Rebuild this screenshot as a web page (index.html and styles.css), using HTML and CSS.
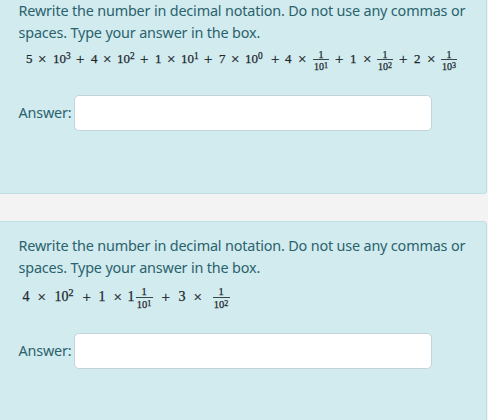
FILE: index.html
```html
<!DOCTYPE html>
<html lang="en">
<head>
<meta charset="utf-8">
<title>Decimal notation</title>
<link rel="stylesheet" href="styles.css">
</head>
<body>
<section class="question first">
  <p class="prompt"><span class="l1">Rewrite the number in decimal notation. Do not use any commas or</span><br><span class="l2">spaces. Type your answer in the box.</span></p>
  <div class="math long">
    <span>5</span><span class="op">×</span><span>10<sup>3</sup></span><span class="op">+</span>
    <span>4</span><span class="op">×</span><span>10<sup>2</sup></span><span class="op">+</span>
    <span>1</span><span class="op">×</span><span>10<sup>1</sup></span><span class="op">+</span>
    <span>7</span><span class="op">×</span><span>10<sup>0</sup></span><span class="op">+</span>
    <span>4</span><span class="op">×</span><span class="frac"><span class="num">1</span><span class="den">10<sup>1</sup></span></span><span class="op">+</span>
    <span>1</span><span class="op">×</span><span class="frac"><span class="num">1</span><span class="den">10<sup>2</sup></span></span><span class="op">+</span>
    <span>2</span><span class="op">×</span><span class="frac"><span class="num">1</span><span class="den">10<sup>3</sup></span></span>
  </div>
  <div class="answer"><label for="a1">Answer:</label><input id="a1" type="text"></div>
</section>
<section class="question second">
  <p class="prompt"><span class="l1">Rewrite the number in decimal notation. Do not use any commas or</span><br><span class="l2">spaces. Type your answer in the box.</span></p>
  <div class="math short">
    <span>4</span><span class="op">×</span><span>10<sup>2</sup></span><span class="op">+</span>
    <span>1</span><span class="op">×</span><span>1</span><span class="frac"><span class="num">1</span><span class="den">10<sup>1</sup></span></span><span class="op">+</span>
    <span>3</span><span class="op">×</span><span class="frac"><span class="num">1</span><span class="den">10<sup>2</sup></span></span>
  </div>
  <div class="answer"><label for="a2">Answer:</label><input id="a2" type="text"></div>
</section>
</body>
</html>
```
FILE: styles.css
```css
* { box-sizing: border-box; }
body {
  margin: 0;
  height: 420px;
  overflow: hidden;
  background: #f3f3f3;
  color: #2b626c;
  font: 14.4px/22px "Noto Sans", "Open Sans", sans-serif;
  letter-spacing: -0.17px;
}
.question {
  width: 487px;
  padding-left: 18.5px;
  background: #d1ebef;
  border: 1px solid #bedfe4;
  border-left: 0;
}
.first {
  height: 194px;
  border-top: 0;
  border-radius: 0 0 4px 0;
}
.second {
  height: 220px;
  margin-top: 27px;
  padding-top: 13px;
  border-radius: 0 4px 0 0;
}
.prompt { margin: 0; white-space: nowrap; }
.math {
  display: grid;
  align-items: center;
  height: 28px;
  color: #1c272b;
  font-family: "Liberation Serif", serif;
  letter-spacing: 0;
  -webkit-text-stroke: 0.25px #1c272b;
  line-height: 14px;
  white-space: nowrap;
}
.long {
  margin: 1px 0 0 7.5px;
  font-size: 13px;
  grid-template-columns: 12px 15px 23px 15px 12px 14px 23px 15px 12px 14px 23px 15px 12px 14px 26px 14px 13px 15px 22px 15px 13px 14px 22px 15px 13px 14px 16px;
}
.short {
  margin: 4px 0 0 4px;
  font-size: 14px;
  grid-template-columns: 15px 17px 28px 16px 15px 14px 8px 26px 17px 15px 19px 17px;
}
.op { font-size: 15px; }
sup {
  font-size: 0.72em;
  line-height: 0;
  vertical-align: 0.45em;
}
.frac {
  display: flex;
  flex-direction: column;
  align-items: center;
  width: 16px;
  font-size: 10px;
  line-height: 9px;
  transform: translateY(1px);
}
.short .frac { width: 17px; font-size: 10.5px; line-height: 10px; }
.num { width: 100%; text-align: center; border-bottom: 1px solid #38474b; }
.den { padding-top: 2px; }
.den sup { font-size: 8px; vertical-align: 0.3em; }
.answer {
  display: flex;
  align-items: center;
  margin-top: 22px;
}
.answer label { width: 55.5px; }
.answer input {
  width: 358px;
  height: 36px;
  padding: 0 10px;
  background: #fff;
  border: 1px solid #c3d3da;
  border-radius: 5px;
  font: inherit;
}
```
